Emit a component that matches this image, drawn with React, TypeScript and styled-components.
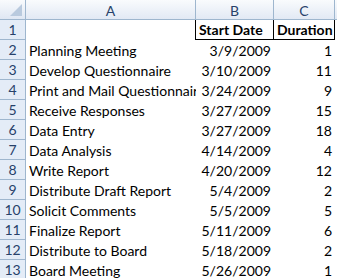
import styled, { createGlobalStyle } from 'styled-components';

const GlobalStyle = createGlobalStyle`
  html, body {
    margin: 0;
    padding: 0;
    background: #ffffff;
  }
  body {
    font-family: Lato, 'Liberation Sans', sans-serif;
  }
`;

const Sheet = styled.div`
  display: grid;
  grid-template-columns: 26px 170px 78px 61px 1fr;
  grid-auto-rows: 20px;
  width: 337px;
  height: 278px;
  overflow: hidden;
  font-size: 14px;
  color: #000;
`;

const Corner = styled.div`
  position: relative;
  background: linear-gradient(#f9fbfd, #dfe7f3);
  border-right: 1px solid #9eb6ce;
  border-bottom: 1px solid #9eb6ce;
  box-sizing: border-box;

  &::after {
    content: '';
    position: absolute;
    right: 3px;
    bottom: 3px;
    width: 0;
    height: 0;
    border-left: 12px solid transparent;
    border-bottom: 12px solid #b9cade;
  }
`;

const ColHead = styled.div`
  display: flex;
  align-items: center;
  justify-content: center;
  box-sizing: border-box;
  background: linear-gradient(#f9fbfd, #e2e9f4);
  border-right: 1px solid #9eb6ce;
  border-bottom: 1px solid #9eb6ce;
  color: #27416a;
  font-size: 14px;
  padding-top: 1px;
`;

const RowHead = styled.div`
  display: flex;
  align-items: flex-end;
  justify-content: center;
  box-sizing: border-box;
  background: #e4ecf7;
  border-right: 1px solid #9eb6ce;
  border-bottom: 1px solid #9eb6ce;
  color: #27416a;
  font-size: 14px;
  padding-bottom: 1px;
`;

const Cell = styled.div<{ $align?: 'left' | 'right' }>`
  display: flex;
  align-items: flex-end;
  justify-content: ${(p) => (p.$align === 'right' ? 'flex-end' : 'flex-start')};
  box-sizing: border-box;
  padding: 0 3px 1px;
  white-space: nowrap;
  overflow: hidden;
  min-width: 0;
`;

const TitleCell = styled(Cell)<{ $first?: boolean }>`
  font-weight: bold;
  border-bottom: 1px solid #000;
  border-right: 1px solid #000;
  ${(p) => (p.$first ? 'border-left: 1px solid #000; margin-left: -1px;' : '')}
`;

const rows: [string, string, number][] = [
  ['Planning Meeting', '3/9/2009', 1],
  ['Develop Questionnaire', '3/10/2009', 11],
  ['Print and Mail Questionnaire', '3/24/2009', 9],
  ['Receive Responses', '3/27/2009', 15],
  ['Data Entry', '3/27/2009', 18],
  ['Data Analysis', '4/14/2009', 4],
  ['Write Report', '4/20/2009', 12],
  ['Distribute Draft Report', '5/4/2009', 2],
  ['Solicit Comments', '5/5/2009', 5],
  ['Finalize Report', '5/11/2009', 6],
  ['Distribute to Board', '5/18/2009', 2],
  ['Board Meeting', '5/26/2009', 1],
];

export default function App() {
  return (
    <>
      <GlobalStyle />
      <Sheet>
        <Corner />
        <ColHead>A</ColHead>
        <ColHead>B</ColHead>
        <ColHead>C</ColHead>
        <ColHead />

        <RowHead>1</RowHead>
        <Cell />
        <TitleCell $first>Start Date</TitleCell>
        <TitleCell>Duration</TitleCell>
        <Cell />

        {rows.map(([task, date, days], i) => (
          <Row key={task} n={i + 2} task={task} date={date} days={days} />
        ))}
      </Sheet>
    </>
  );
}

function Row({ n, task, date, days }: { n: number; task: string; date: string; days: number }) {
  return (
    <>
      <RowHead>{n}</RowHead>
      <Cell>{task}</Cell>
      <Cell $align="right">{date}</Cell>
      <Cell $align="right">{days}</Cell>
      <Cell />
    </>
  );
}
